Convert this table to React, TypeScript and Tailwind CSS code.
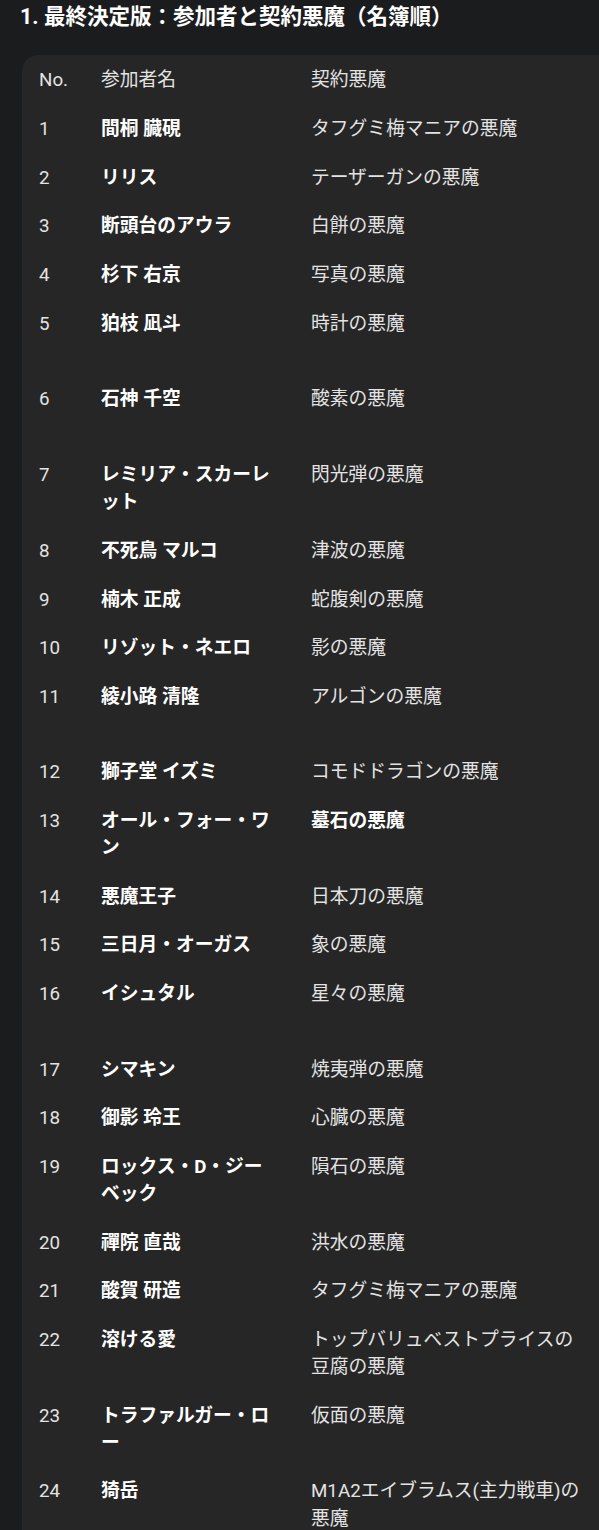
import React from "react";

type Row = { no: number; name: string; devil: string; tall?: boolean; boldDevil?: boolean };

const rows: Row[] = [
  { no: 1, name: "間桐 臓硯", devil: "タフグミ梅マニアの悪魔" },
  { no: 2, name: "リリス", devil: "テーザーガンの悪魔" },
  { no: 3, name: "断頭台のアウラ", devil: "白餅の悪魔" },
  { no: 4, name: "杉下 右京", devil: "写真の悪魔" },
  { no: 5, name: "狛枝 凪斗", devil: "時計の悪魔", tall: true },
  { no: 6, name: "石神 千空", devil: "酸素の悪魔", tall: true },
  { no: 7, name: "レミリア・スカーレット", devil: "閃光弾の悪魔" },
  { no: 8, name: "不死鳥 マルコ", devil: "津波の悪魔" },
  { no: 9, name: "楠木 正成", devil: "蛇腹剣の悪魔" },
  { no: 10, name: "リゾット・ネエロ", devil: "影の悪魔" },
  { no: 11, name: "綾小路 清隆", devil: "アルゴンの悪魔", tall: true },
  { no: 12, name: "獅子堂 イズミ", devil: "コモドドラゴンの悪魔" },
  { no: 13, name: "オール・フォー・ワン", devil: "墓石の悪魔", boldDevil: true },
  { no: 14, name: "悪魔王子", devil: "日本刀の悪魔" },
  { no: 15, name: "三日月・オーガス", devil: "象の悪魔" },
  { no: 16, name: "イシュタル", devil: "星々の悪魔", tall: true },
  { no: 17, name: "シマキン", devil: "焼夷弾の悪魔" },
  { no: 18, name: "御影 玲王", devil: "心臓の悪魔" },
  { no: 19, name: "ロックス・D・ジーベック", devil: "隕石の悪魔" },
  { no: 20, name: "禪院 直哉", devil: "洪水の悪魔" },
  { no: 21, name: "酸賀 研造", devil: "タフグミ梅マニアの悪魔" },
  { no: 22, name: "溶ける愛", devil: "トップバリュベストプライスの豆腐の悪魔" },
  { no: 23, name: "トラファルガー・ロー", devil: "仮面の悪魔" },
  { no: 24, name: "猗岳", devil: "M1A2エイブラムス(主力戦車)の悪魔" },
];

export default function App() {
  return (
    <div
      className="w-full min-h-screen overflow-hidden bg-[#1b1c1d] text-[#e3e3e3]"
      style={{ fontFamily: 'Roboto, "Noto Sans CJK JP", sans-serif' }}
    >
      <h3 className="pl-[20px] pt-[2px] text-[21.5px] leading-[30px] font-bold text-white">
        1. 最終決定版：参加者と契約悪魔（名簿順）
      </h3>
      <div className="ml-[22px] mt-[23px] w-[900px] rounded-[16px] bg-[#262626] pt-[1px] pb-[16px] text-[18.75px] leading-[27.2px]">
        <div className="flex pb-[1px]">
          <div className="w-[62px] shrink-0 pl-[17px] py-[10.7px]">No.</div>
          <div className="w-[210px] shrink-0 px-[17px] py-[10.7px]">参加者名</div>
          <div className="w-[310px] shrink-0 px-[17px] py-[10.7px]">契約悪魔</div>
        </div>
        {rows.map((r) => (
          <div key={r.no} className={`flex items-start ${r.tall ? "h-[75.8px]" : ""}`}>
            <div className="w-[62px] shrink-0 pl-[17px] py-[10.7px]">{r.no}</div>
            <div className="w-[210px] shrink-0 px-[17px] py-[10.7px] font-bold text-white">{r.name}</div>
            <div className={`w-[310px] shrink-0 px-[17px] py-[10.7px] ${r.boldDevil ? "font-bold text-white" : ""}`}>
              {r.devil}
            </div>
          </div>
        ))}
      </div>
    </div>
  );
}
